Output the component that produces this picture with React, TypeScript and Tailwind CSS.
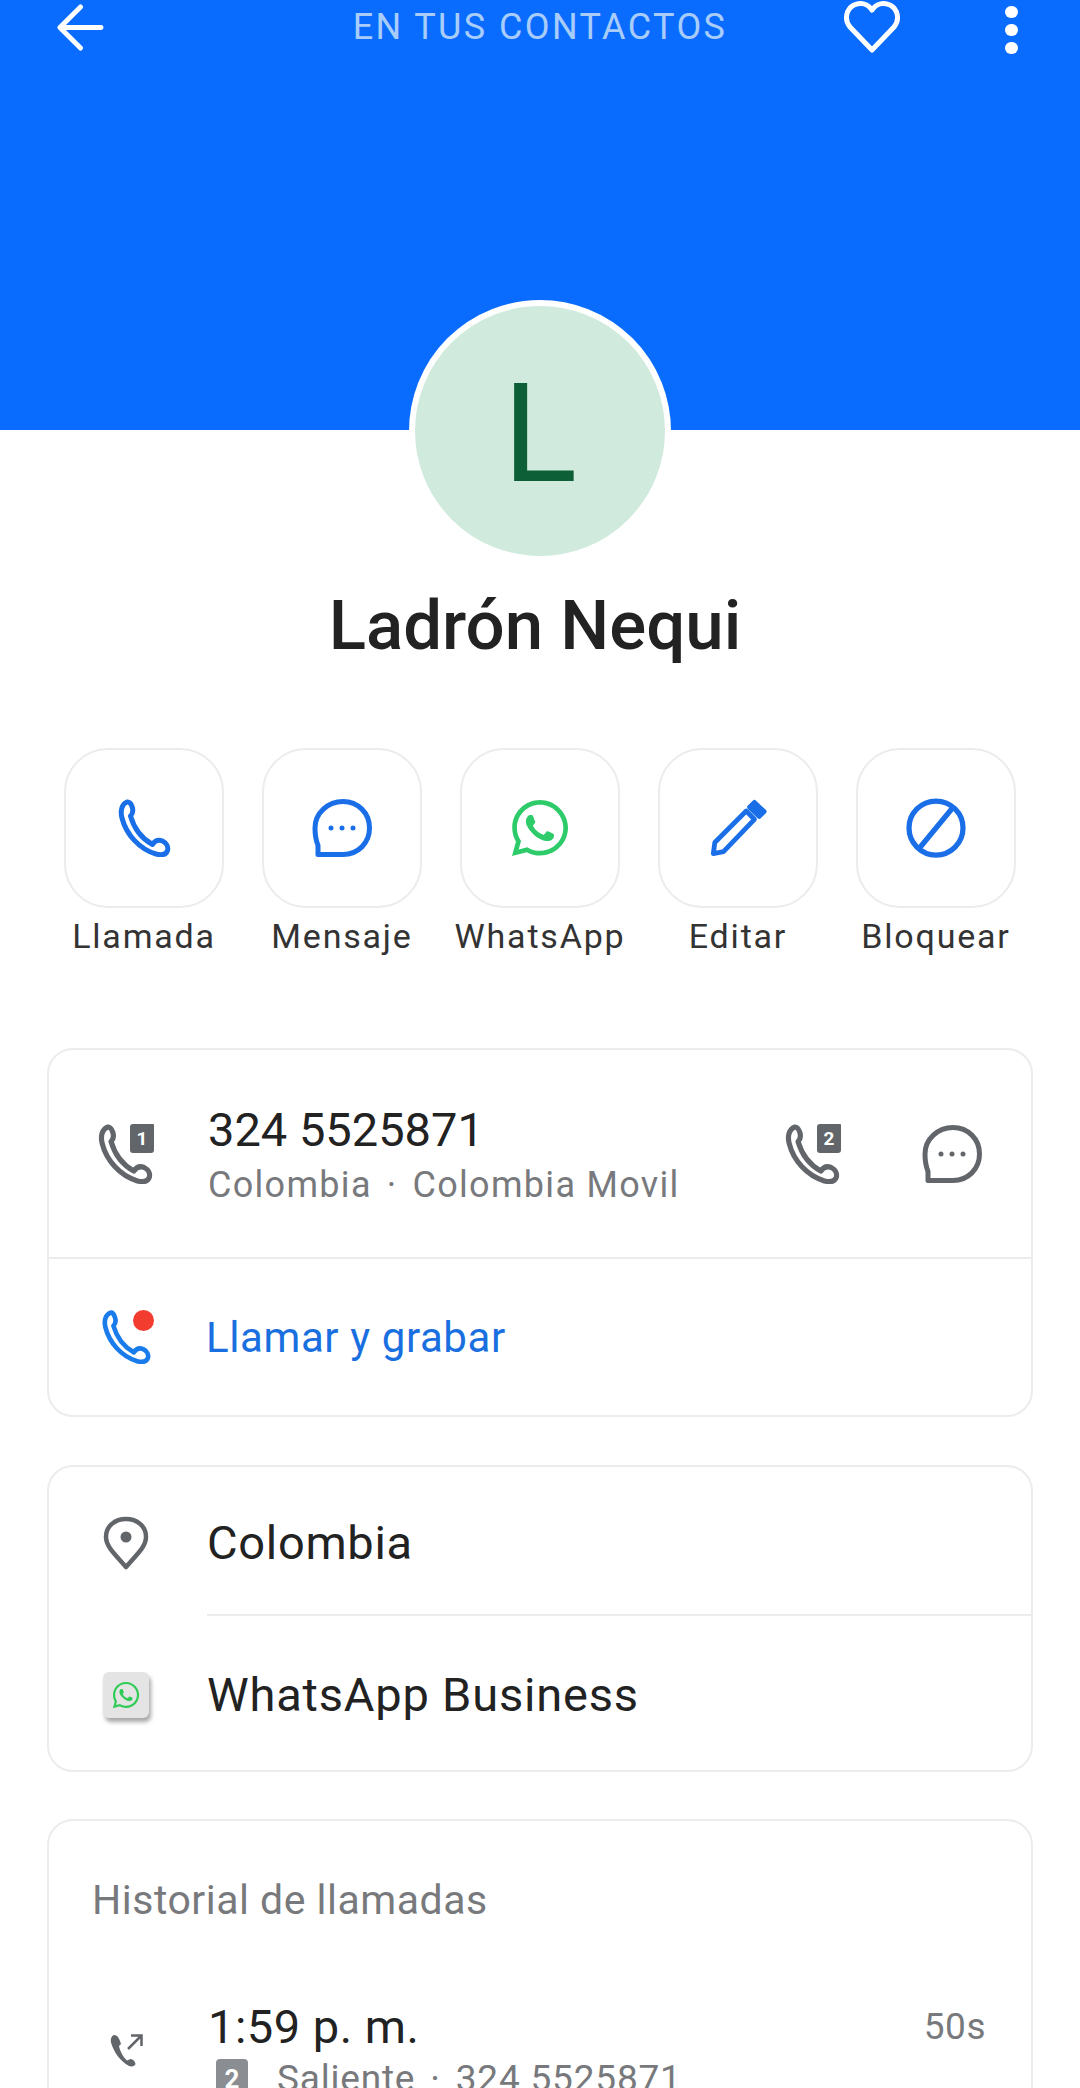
import { FaWhatsapp } from "react-icons/fa";

const font = { fontFamily: 'Roboto, "Noto Sans", sans-serif' };

const phonePath =
  "M5.2 1.6C3.2 2.4 2.4 5 3.2 8C4.8 14.4 10 20.4 16.8 22.4C19 23 20.8 22.6 21.4 21C21.8 19.6 21 18 19.4 17.2C17.8 16.6 16.4 17 15.4 18.6C11 16.2 8 12 6.6 7.2C7.6 6.2 7.8 5 7.2 3.4C6.8 2.2 6 1.4 5.2 1.6Z";

function PhoneIcon({ className }: { className: string }) {
  return (
    <svg viewBox="1.4 0.4 21.2 23.2" fill="none" stroke="currentColor" strokeWidth="2" strokeLinejoin="round" className={className}>
      <path d={phonePath} />
    </svg>
  );
}

function BubbleIcon({ className }: { className: string }) {
  return (
    <svg viewBox="0 0 24 24" fill="none" stroke="currentColor" strokeWidth="2" strokeLinejoin="round" className={className}>
      <path d="M12.4 1.4C18.4 1.4 23 6 23 12C23 18 18.4 22.6 12.4 22.6H2.4V19C1.6 17 1.2 14.6 1.2 12C1.2 6 6.4 1.4 12.4 1.4Z" />
      <circle cx="7.6" cy="12" r="1" fill="currentColor" stroke="none" />
      <circle cx="12" cy="12" r="1" fill="currentColor" stroke="none" />
      <circle cx="16.4" cy="12" r="1" fill="currentColor" stroke="none" />
    </svg>
  );
}

function PencilIcon({ className }: { className: string }) {
  return (
    <svg viewBox="0 0 24 24" fill="none" stroke="currentColor" strokeWidth="2" strokeLinejoin="round" className={className}>
      <path d="M1.8 22.6L2.4 18L15.4 5L18.8 8.400L6 21.800Z" />
      <path d="M18.800 1.400L22.800 5.200L20.800 7.200L16.800 3.400Z" fill="currentColor" />
    </svg>
  );
}

function BlockIcon({ className }: { className: string }) {
  return (
    <svg viewBox="0 0 24 24" fill="none" stroke="currentColor" strokeWidth="2.1" className={className}>
      <circle cx="12" cy="12" r="10.8" />
      <path d="M5.4 20L18.6 4" />
    </svg>
  );
}

function SimPhone({ n }: { n: string }) {
  return (
    <div className="relative w-[62px] h-[60px] text-[#62666a]">
      <PhoneIcon className="w-[62px] h-[60px]" />
      <div className="absolute right-[2px] top-0 w-[24px] h-[29px] bg-[#62666a] rounded-[3px] rounded-tr-[1px] flex items-center justify-center text-white text-[19px] font-bold leading-none">
        {n}
      </div>
    </div>
  );
}

const actions = [
  { label: "Llamada", icon: <PhoneIcon className="w-[58px] h-[58px]" />, color: "text-[#1a6fe8]" },
  { label: "Mensaje", icon: <BubbleIcon className="w-[60px] h-[60px]" />, color: "text-[#1a6fe8]" },
  { label: "WhatsApp", icon: <FaWhatsapp className="w-[64px] h-[64px]" />, color: "text-[#2ecb6b]" },
  { label: "Editar", icon: <PencilIcon className="w-[58px] h-[58px]" />, color: "text-[#1a6fe8]" },
  { label: "Bloquear", icon: <BlockIcon className="w-[60px] h-[60px]" />, color: "text-[#1a6fe8]" },
];

export default function App() {
  return (
    <div style={font} className="w-[1080px] h-[2088px] overflow-hidden bg-white text-[#222]">
      {/* header */}
      <div className="h-[430px] bg-[#0a6cff]">
        <div className="h-[54px] relative flex items-center justify-center">
          <span className="text-[36px] text-[#a9cdfb] tracking-[2.400px] leading-none">EN TUS CONTACTOS</span>
          <svg viewBox="0 0 48 48" fill="none" stroke="white" strokeWidth="5" strokeLinecap="round" strokeLinejoin="round" className="absolute left-[57px] top-[4px] w-[47px] h-[47px]">
            <path d="M3 24H45M24 3L3 24L24 45" />
          </svg>
          <svg viewBox="0 0 58 54" fill="none" stroke="white" strokeWidth="5" strokeLinejoin="round" className="absolute left-[843px] top-0 w-[58px] h-[54px]">
            <path d="M29 50L7 27C1 20 3 9 11 5C18 2 25 4 29 10C33 4 40 2 47 5C55 9 57 20 51 27Z" />
          </svg>
          <div className="absolute left-[1005px] top-[6px] flex flex-col gap-[6px]">
            <div className="w-[13px] h-[12px] rounded-full bg-white" />
            <div className="w-[13px] h-[12px] rounded-full bg-white" />
            <div className="w-[13px] h-[12px] rounded-full bg-white" />
          </div>
        </div>
      </div>

      {/* avatar + name */}
      <div className="flex flex-col items-center mt-[-130px]">
        <div className="w-[262px] h-[262px] pt-[6px] rounded-full bg-[#d0ebdd] border-[6px] border-white flex items-center justify-center text-[#0d5f37] text-[138px] leading-none">
          L
        </div>
        <div className="mt-[24px] mr-[10px] text-[69px] font-medium leading-[80px] text-[#222]">Ladrón Nequi</div>
      </div>

      {/* actions */}
      <div className="mt-[82px] px-[64px] flex justify-between">
        {actions.map((item) => (
          <div key={item.label} className="w-[160px] flex flex-col items-center">
            <div className={"w-[160px] h-[160px] rounded-[44px] border-2 border-[#ececec] flex items-center justify-center " + item.color}>
              {item.icon}
            </div>
            <div className="mt-[8px] text-[34px] leading-[40px] tracking-[1.800px] whitespace-nowrap text-[#333]">{item.label}</div>
          </div>
        ))}
      </div>

      {/* number card */}
      <div className="mt-[92px] mx-[47px] h-[369px] rounded-[26px] border-2 border-[#ececec] flex flex-col">
        <div className="h-[209px] border-b-2 border-[#ececec] flex items-center pl-[45px] pr-[49px]">
          <SimPhone n="1" />
          <div className="ml-[52px] flex-1">
            <div className="text-[47px] leading-[56px] text-[#222]">324 5525871</div>
            <div className="mt-[6px] flex text-[36px] leading-[42px] text-[#77797c] tracking-[1.300px] whitespace-nowrap">
              <span>Colombia</span>
              <span className="mx-[15px]">·</span>
              <span>Colombia Movil</span>
            </div>
          </div>
          <SimPhone n="2" />
          <BubbleIcon className="ml-[79px] w-[60px] h-[60px] text-[#62666a]" />
        </div>
        <div className="flex-1 flex items-center pl-[49px]">
          <div className="relative w-[56px] h-[54px] text-[#1a7bea]">
            <PhoneIcon className="w-[56px] h-[54px]" />
            <div className="absolute right-0 top-0 w-[21px] h-[21px] rounded-full bg-[#f23c2f]" />
          </div>
          <div className="ml-[52px] text-[42px] text-[#1a6fe0] tracking-[0.600px]">Llamar y grabar</div>
        </div>
      </div>

      {/* info card */}
      <div className="mt-[48px] mx-[47px] h-[307px] rounded-[26px] border-2 border-[#ececec] flex flex-col">
        <div className="h-[147px] pt-[5px] flex items-center pl-[54px]">
          <svg viewBox="0 0 46 54" fill="none" stroke="#62666a" strokeWidth="4.5" strokeLinejoin="round" className="w-[46px] h-[54px]">
            <path d="M23 51C13 39 3 31 3 21C3 10 12 3 23 3C34 3 43 10 43 21C43 31 33 39 23 51Z" />
            <circle cx="23" cy="21" r="5.5" fill="#62666a" stroke="none" />
          </svg>
          <div className="ml-[58px] text-[47px] text-[#222] tracking-[0.700px]">Colombia</div>
        </div>
        <div className="ml-[158px] border-t-2 border-[#ececec]" />
        <div className="flex-1 pt-[4px] flex items-center pl-[54px]">
          <div className="w-[46px] h-[46px] rounded-[6px] bg-[#e4e4e4] shadow-[2px_4px_4px_rgba(0,0,0,0.35)] flex items-center justify-center text-[#2ecb55]">
            <FaWhatsapp className="w-[30px] h-[30px]" />
          </div>
          <div className="ml-[58px] text-[47px] text-[#222] tracking-[0.800px] whitespace-nowrap">WhatsApp Business</div>
        </div>
      </div>

      {/* history card */}
      <div className="mt-[47px] mx-[47px] h-[400px] rounded-[26px] border-2 border-[#ececec] pt-[56px]">
        <div className="pl-[43px] text-[41px] leading-[46px] text-[#77797c] tracking-[0.500px]">Historial de llamadas</div>
        <div className="mt-[76px] flex pl-[60px] pr-[45px]">
          <svg viewBox="0 0 36 36" fill="none" stroke="#62666a" className="mt-[33px] w-[36px] h-[36px] shrink-0">
            <path d="M5 3C2 4 1 8 2.500 12C5 20 11 29 20 34C23 35 26 34 26.500 32C26.500 30 24 27 21.500 27L18 28.500C14 25 11 19 10 14L12 12C11 8 9 3 5 3Z" fill="#62666a" stroke="none" />
            <path d="M19 17L32 4M22 3.500H32.500V14" strokeWidth="2.500" />
          </svg>
          <div className="ml-[63px] flex-1 min-w-0">
            <div className="flex justify-between items-center">
              <div className="text-[47px] leading-[56px] text-[#222] tracking-[0.500px]">1:59 p. m.</div>
              <div className="text-[37px] text-[#77797c] tracking-[0.500px]">50s</div>
            </div>
            <div className="mt-[4px] flex items-center whitespace-nowrap">
              <div className="ml-[8px] w-[32px] h-[40px] rounded-[4px] bg-[#8a8d91] flex items-center justify-center text-white text-[26px] font-bold leading-none">2</div>
              <div className="ml-[29px] flex text-[37px] leading-[40px] text-[#77797c] tracking-[0.800px]">
                <span>Saliente</span>
                <span className="mx-[15px]">·</span>
                <span>324 5525871</span>
              </div>
            </div>
          </div>
        </div>
      </div>
    </div>
  );
}
